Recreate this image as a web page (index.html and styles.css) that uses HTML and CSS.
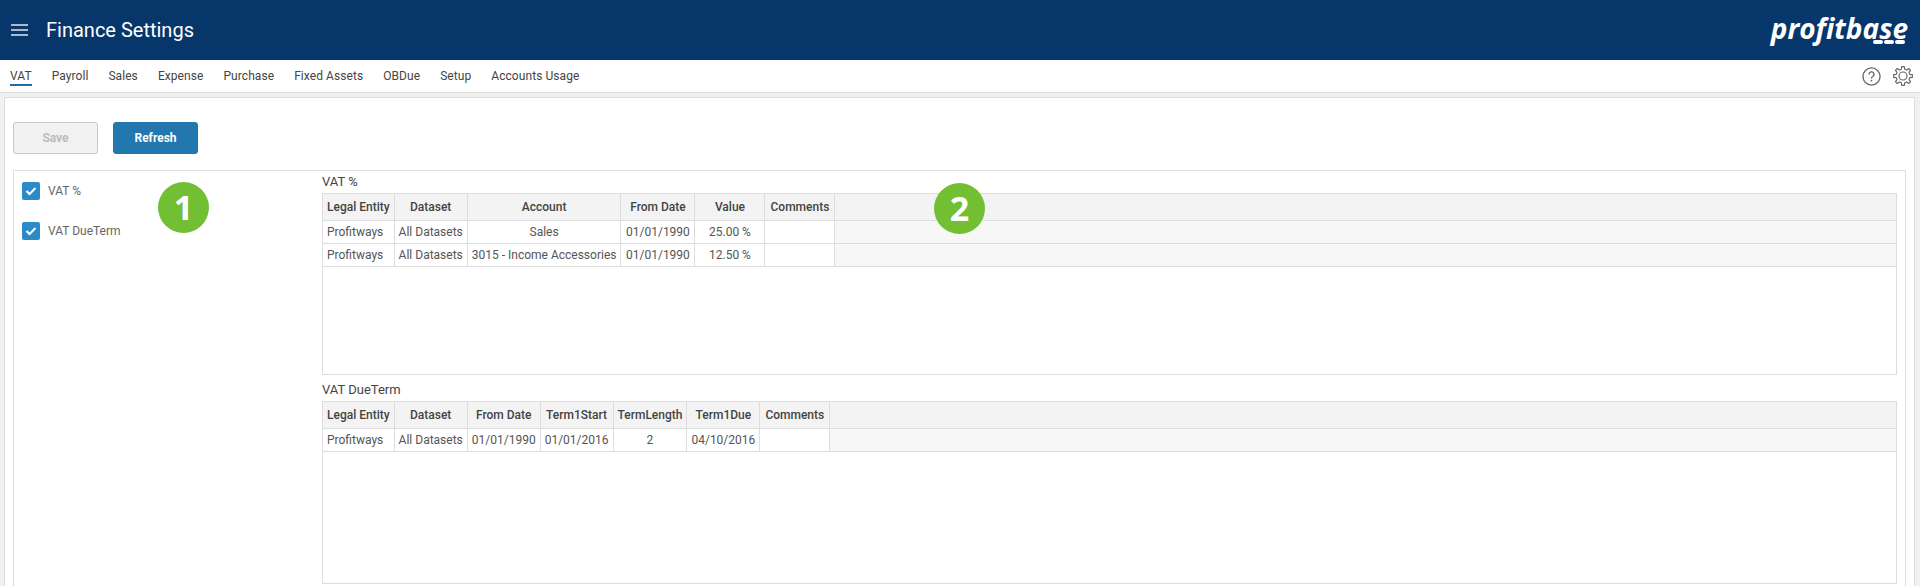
FILE: index.html
```html
<!DOCTYPE html>
<html lang="en">
<head>
  <meta charset="UTF-8">
  <title>Finance Settings</title>
  <link rel="stylesheet" href="styles.css">
</head>
<body>
  <header class="topbar">
    <svg class="menu-icon" width="17" height="12" viewBox="0 0 17 12">
      <path d="M0 1h17M0 6h17M0 11h17" stroke="#dfe6ee" stroke-width="1.6" fill="none"/>
    </svg>
    <h1 class="page-title">Finance Settings</h1>
    <div class="logo">
      <span class="logo-text">profitbase</span>
      <span class="logo-dots"><i></i><i></i><i></i></span>
    </div>
  </header>

  <nav class="tabs">
    <a class="tab active">VAT</a>
    <a class="tab">Payroll</a>
    <a class="tab">Sales</a>
    <a class="tab">Expense</a>
    <a class="tab">Purchase</a>
    <a class="tab">Fixed Assets</a>
    <a class="tab">OBDue</a>
    <a class="tab">Setup</a>
    <a class="tab">Accounts Usage</a>
    <div class="tab-icons">
      <svg width="19" height="19" viewBox="0 0 20 20">
        <circle cx="10" cy="10" r="9" fill="none" stroke="#666" stroke-width="1.4"/>
        <path d="M7.4 7.8a2.6 2.6 0 1 1 3.9 2.2c-.9.5-1.3 1-1.3 2" fill="none" stroke="#666" stroke-width="1.4"/>
        <circle cx="10" cy="14.4" r=".9" fill="#666"/>
      </svg>
      <svg width="20" height="20" viewBox="0 0 24 24">
        <polygon points="9.97,3.85 10.43,.81 13.57,.81 14.03,3.85 16.33,4.8 18.8,2.98 21.02,5.2 19.2,7.67 20.15,9.97 23.19,10.43 23.19,13.57 20.15,14.03 19.2,16.33 21.02,18.8 18.8,21.02 16.33,19.2 14.03,20.15 13.57,23.19 10.43,23.19 9.97,20.15 7.67,19.2 5.2,21.02 2.98,18.8 4.8,16.33 3.85,14.03 .81,13.57 .81,10.43 3.85,9.97 4.8,7.67 2.98,5.2 5.2,2.98 7.67,4.8" fill="none" stroke="#666" stroke-width="1.4" stroke-linejoin="round"/>
        <circle cx="12" cy="12" r="4.8" fill="none" stroke="#666" stroke-width="1.4"/>
      </svg>
    </div>
  </nav>

  <main class="panel">
    <div class="actions">
      <button class="btn btn-disabled" disabled>Save</button>
      <button class="btn btn-primary">Refresh</button>
    </div>

    <div class="content">
      <aside class="sidebar">
        <label class="check-row">
          <span class="checkbox"><svg width="12" height="10" viewBox="0 0 12 10"><path d="M1.5 5l3 3 6-6" fill="none" stroke="#fff" stroke-width="2"/></svg></span>
          VAT %
        </label>
        <label class="check-row">
          <span class="checkbox"><svg width="12" height="10" viewBox="0 0 12 10"><path d="M1.5 5l3 3 6-6" fill="none" stroke="#fff" stroke-width="2"/></svg></span>
          VAT DueTerm
        </label>
        <span class="badge badge-one">1</span>
      </aside>

      <section class="tables">
        <span class="badge badge-two">2</span>

        <h2 class="table-title">VAT %</h2>
        <div class="grid-box grid-vat">
          <table class="grid">
            <thead>
              <tr><th>Legal Entity</th><th>Dataset</th><th>Account</th><th class="col-date">From Date</th><th class="col-wide">Value</th><th class="col-wide">Comments</th><th class="filler"></th></tr>
            </thead>
            <tbody>
              <tr><td class="left">Profitways</td><td>All Datasets</td><td>Sales</td><td>01/01/1990</td><td>25.00 %</td><td></td><td class="filler"></td></tr>
              <tr><td class="left">Profitways</td><td>All Datasets</td><td>3015 - Income Accessories</td><td>01/01/1990</td><td>12.50 %</td><td></td><td class="filler"></td></tr>
            </tbody>
          </table>
        </div>

        <h2 class="table-title">VAT DueTerm</h2>
        <div class="grid-box grid-due">
          <table class="grid">
            <thead>
              <tr><th>Legal Entity</th><th>Dataset</th><th>From Date</th><th>Term1Start</th><th>TermLength</th><th>Term1Due</th><th class="col-wide">Comments</th><th class="filler"></th></tr>
            </thead>
            <tbody>
              <tr><td class="left">Profitways</td><td>All Datasets</td><td>01/01/1990</td><td>01/01/2016</td><td>2</td><td>04/10/2016</td><td></td><td class="filler"></td></tr>
            </tbody>
          </table>
        </div>
      </section>
    </div>
  </main>
</body>
</html>
```

FILE: styles.css
```css
/* General Reset */
* {
  margin: 0;
  padding: 0;
  box-sizing: border-box;
}

html, body {
  height: 586px;
  overflow: hidden;
}

body {
  background: #f1f1f1;
  color: #555;
  font-family: Roboto, Arial, sans-serif;
  font-size: 12px;
}

/* Top bar */
.topbar {
  height: 60px;
  background: #07366b;
  display: flex;
  align-items: center;
  padding: 0 12px 0 11px;
}

.menu-icon {
  flex: none;
}

.page-title {
  margin-left: 18px;
  color: #fff;
  font-size: 20px;
  font-weight: 400;
}

.logo {
  margin-left: auto;
  display: flex;
  flex-direction: column;
  align-items: flex-end;
  color: #fff;
}

.logo-text {
  font-family: "Open Sans", Arial, sans-serif;
  font-size: 28px;
  font-weight: 700;
  font-style: italic;
  line-height: 24px;
}

.logo-dots {
  display: flex;
  gap: 1px;
  margin: 0 3px 0 0;
}

.logo-dots i {
  width: 10px;
  height: 4px;
  border-radius: 2px;
  background: #fff;
}

/* Tabs */
.tabs {
  height: 33px;
  background: #fff;
  border-bottom: 1px solid #ddd;
  display: flex;
  align-items: center;
  padding: 0 7px 0 10px;
  gap: 20px;
}

.tab {
  color: #444;
  font-size: 12px;
  letter-spacing: 0.07px;
  padding: 3px 0 1px;
  border-bottom: 2px solid transparent;
}

.tab.active {
  border-bottom-color: #1f6fa5;
}

.tab-icons {
  margin-left: auto;
  display: flex;
  align-items: center;
  gap: 12px;
}

/* Main panel, runs off the bottom of the window so no bottom border */
.panel {
  margin: 4px 5px 0 4px;
  height: 489px;
  background: #fff;
  border: 1px solid #ddd;
  border-bottom: none;
  padding: 24px 8px 0 8px;
}

.actions {
  display: flex;
  gap: 15px;
}

.btn {
  width: 85px;
  height: 32px;
  border-radius: 3px;
  font-family: inherit;
  font-size: 12px;
  font-weight: 700;
}

.btn-disabled {
  background: #f1f1f1;
  border: 1px solid #c8c8c8;
  color: #bbb;
}

.btn-primary {
  background: #2177ae;
  border: 1px solid #2177ae;
  color: #fff;
}

.content {
  display: flex;
  margin-top: 16px;
  height: 416px;
  border: 1px solid #ddd;
  border-bottom: none;
}

.sidebar {
  position: relative;
  width: 308px;
  flex: none;
  padding: 11px 0 0 8px;
}

.check-row {
  display: flex;
  align-items: center;
  gap: 8px;
  height: 18px;
  margin-bottom: 22px;
  color: #666;
}

.checkbox {
  width: 18px;
  height: 18px;
  background: #2b8bc9;
  border-radius: 2px;
  display: flex;
  align-items: center;
  justify-content: center;
}

.badge {
  position: absolute;
  width: 51px;
  height: 51px;
  border-radius: 50%;
  background: #72bf33;
  color: #fff;
  font-family: "Open Sans", Arial, sans-serif;
  font-size: 34px;
  font-weight: 700;
  line-height: 51px;
  text-align: center;
}

.badge-one {
  left: 144px;
  top: 11px;
}

.badge-two {
  left: 612px;
  top: 12px;
}

/* Tables */
.tables {
  position: relative;
  flex: 1;
  padding-right: 8px;
}

.table-title {
  height: 22px;
  color: #444;
  font-size: 13px;
  font-weight: 400;
  line-height: 22px;
}

.grid-box {
  border: 1px solid #ddd;
  overflow: hidden;
}

.grid-vat {
  height: 182px;
  margin-bottom: 4px;
}

.grid-due {
  height: 183px;
}

.grid {
  width: 100%;
  border-collapse: collapse;
}

.grid th, .grid td {
  border-right: 1px solid #ddd;
  border-bottom: 1px solid #ddd;
  padding: 0 4px;
  white-space: nowrap;
  text-align: center;
  font-size: 12px;
}

.grid th {
  height: 26px;
  background: #f3f3f3;
  color: #444;
  font-weight: 500;
}

.grid td {
  height: 23px;
  color: #555;
}

.grid td.left {
  text-align: left;
}

.grid .col-date {
  width: 74px;
  min-width: 74px;
}

.grid .col-wide {
  min-width: 70px;
  width: 70px;
}

.grid .filler {
  width: 100%;
  border-right: none;
}

.grid td.filler {
  background: #f7f7f7;
}
```
